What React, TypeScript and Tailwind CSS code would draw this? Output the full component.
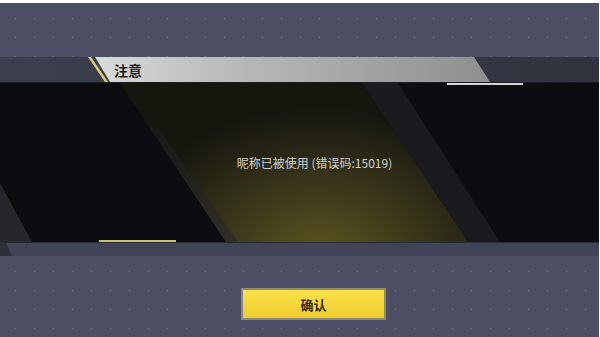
const dots =
  "bg-[#4d5064] bg-[radial-gradient(circle,rgba(140,145,170,0.4)_0.7px,transparent_1.1px)] bg-[length:19px_19px] bg-[position:6px_6px]";

export default function App() {
  return (
    <div
      className="w-[600px] h-[337px] overflow-hidden bg-white flex flex-col pt-[3px] pr-[1px]"
      style={{ fontFamily: '"Noto Sans CJK SC", "Noto Sans", sans-serif' }}
    >
      {/* 上方底纹 */}
      <div className={`h-[54px] shrink-0 ${dots}`} />

      {/* 标题栏 */}
      <div className="relative h-[25px] shrink-0 bg-[linear-gradient(to_right,#3b3e4c,#373a47_60%,#30323d)]">
        <div className="absolute left-[88px] top-0 h-full w-[404px] bg-[#d8d070] [clip-path:polygon(0_0,3px_0,20px_100%,17px_100%)]" />
        <div className="absolute left-[92px] top-0 h-full w-[400px] bg-[linear-gradient(to_right,#dcdcdc,#bdbdbd_30%,#8e8e90_100%)] [clip-path:polygon(3px_0,382px_0,398px_100%,18px_100%)]" />
        <div className="relative flex h-full items-center pl-[114px]">
          <span className="text-[14px] font-bold text-[#1c1c1e] leading-none">注意</span>
        </div>
      </div>

      {/* 内容面板 */}
      <div className="relative h-[160px] shrink-0 overflow-hidden bg-[#0d0d11] border-t border-[#1c1c22]">
        <div className="absolute inset-0 bg-[#26272c] [clip-path:polygon(0_100px,32px_159px,0_159px)]" />
        <div className="absolute inset-0 bg-[radial-gradient(ellipse_230px_170px_at_320px_175px,#5e5720,#38351a_45%,#16160f_88%)] [clip-path:polygon(120px_0,362px_0,468px_159px,226px_159px)]" />
        <div className="absolute inset-0 bg-[linear-gradient(to_bottom,#1a1a1e,#26262a)] [clip-path:polygon(150px_45px,158px_45px,238px_159px,226px_159px)] opacity-60" />
        <div className="absolute inset-0 bg-[#1b1b1f] [clip-path:polygon(362px_0,398px_0,500px_159px,468px_159px)]" />
        <div className="absolute left-[447px] top-0 h-[2px] w-[76px] bg-[#d6d6d6]" />
        <div className="absolute left-[99px] bottom-0 h-[2px] w-[77px] bg-[#c9c07a]" />
        <div className="relative flex h-full items-start justify-center pt-[74px] pl-[30px]">
          <span className="text-[12px] text-[#cfcfcf] leading-none">昵称已被使用 (错误码:15019)</span>
        </div>
      </div>

      {/* 底部阴影条 */}
      <div className="relative h-[14px] shrink-0 bg-[#414456] border-t border-[#2a2c35]">
        <div className="absolute inset-0 bg-[#2e3039] [clip-path:polygon(0_0,6px_0,12px_100%,0_100%)]" />
      </div>

      {/* 按钮区域 */}
      <div className={`flex-1 flex justify-center pt-[32px] pl-[28px] ${dots}`}>
        <button className="h-[32px] w-[145px] border-2 border-[#8f8c76] bg-[linear-gradient(to_bottom,#fbe14a,#f0cc2c)] text-[13px] font-bold text-[#2e2a14] leading-none">
          确认
        </button>
      </div>
    </div>
  );
}
